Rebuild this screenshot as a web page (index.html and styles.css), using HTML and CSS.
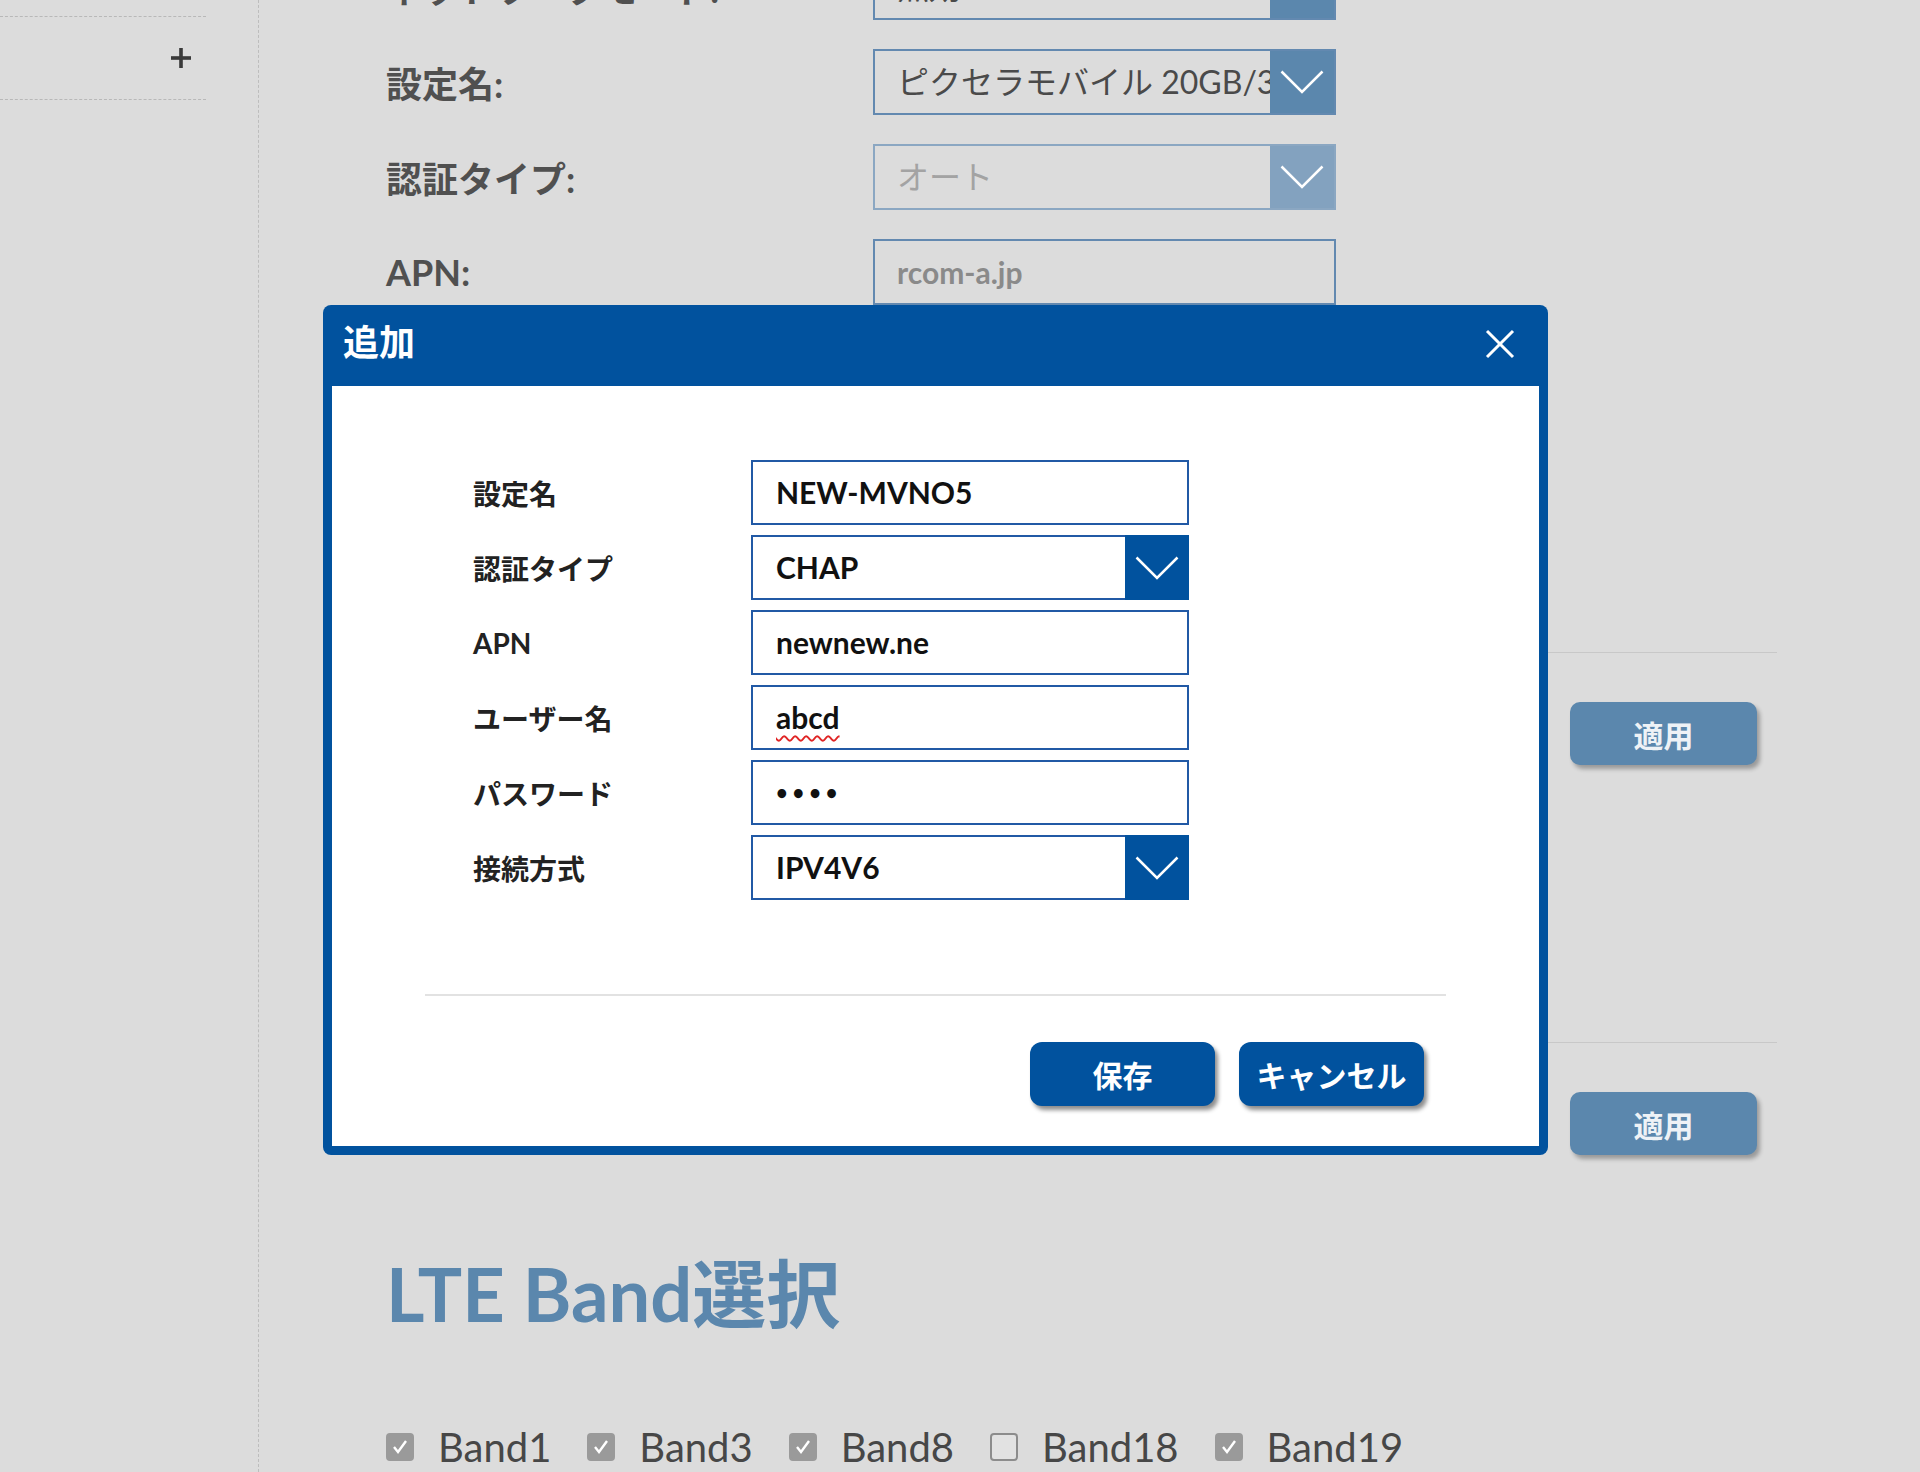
FILE: index.html
```html
<!DOCTYPE html>
<html lang="ja">
<head>
  <meta charset="UTF-8" />
  <meta name="viewport" content="width=device-width, initial-scale=1.0" />
  <title>モバイル設定</title>
  <link rel="stylesheet" href="styles.css">
</head>
<body>
  <div class="page">
    <aside class="sidebar">
      <ul class="menu">
        <li class="menu-item"></li>
        <li class="menu-item">
          <svg class="expand" width="22" height="22" viewBox="0 0 22 22"><rect x="9.2" y="1" width="3.6" height="20" fill="#3a3a3a"/><rect x="1" y="9.2" width="20" height="3.6" fill="#3a3a3a"/></svg>
        </li>
      </ul>
    </aside>

    <main class="content">
      <!-- APN settings -->
      <section class="settings first">
        <div class="row">
          <span class="label">ネットワークモード:</span>
          <div class="select"><span class="value">無効</span><span class="arrow"><svg width="44" height="24" viewBox="0 0 44 24"><polyline points="1.5,1.5 22,22 42.5,1.5" fill="none" stroke="#fff" stroke-width="2.5"/></svg></span></div>
        </div>
        <div class="row">
          <span class="label">設定名:</span>
          <div class="select"><span class="value">ピクセラモバイル 20GB/3GB</span><span class="arrow"><svg width="44" height="24" viewBox="0 0 44 24"><polyline points="1.5,1.5 22,22 42.5,1.5" fill="none" stroke="#fff" stroke-width="2.5"/></svg></span></div>
        </div>
        <div class="row">
          <span class="label">認証タイプ:</span>
          <div class="select disabled"><span class="value">オート</span><span class="arrow"><svg width="44" height="24" viewBox="0 0 44 24"><polyline points="1.5,1.5 22,22 42.5,1.5" fill="none" stroke="#fff" stroke-width="2.5"/></svg></span></div>
        </div>
        <div class="row">
          <span class="label">APN:</span>
          <div class="select text"><span class="value">rcom-a.jp</span></div>
        </div>
      </section>
      <div class="actions"><button class="apply">適用</button></div>

      <!-- second block, covered by the dialog -->
      <section class="settings second"></section>
      <div class="actions"><button class="apply">適用</button></div>

      <h2 class="band-title">LTE Band選択</h2>
      <div class="bands">
        <label class="band"><span class="check on"><svg width="20" height="20" viewBox="0 0 20 20"><polyline points="4,10 8,15 16,4" fill="none" stroke="#fff" stroke-width="2.4"/></svg></span>Band1</label>
        <label class="band"><span class="check on"><svg width="20" height="20" viewBox="0 0 20 20"><polyline points="4,10 8,15 16,4" fill="none" stroke="#fff" stroke-width="2.4"/></svg></span>Band3</label>
        <label class="band"><span class="check on"><svg width="20" height="20" viewBox="0 0 20 20"><polyline points="4,10 8,15 16,4" fill="none" stroke="#fff" stroke-width="2.4"/></svg></span>Band8</label>
        <label class="band"><span class="check"></span>Band18</label>
        <label class="band"><span class="check on"><svg width="20" height="20" viewBox="0 0 20 20"><polyline points="4,10 8,15 16,4" fill="none" stroke="#fff" stroke-width="2.4"/></svg></span>Band19</label>
      </div>
    </main>
  </div>

  <!-- Add profile dialog -->
  <div class="modal">
    <div class="modal-header">
      <h2 class="modal-title">追加</h2>
      <svg class="close" width="32" height="32" viewBox="0 0 32 32"><line x1="3" y1="3" x2="29" y2="29" stroke="#fff" stroke-width="3"/><line x1="29" y1="3" x2="3" y2="29" stroke="#fff" stroke-width="3"/></svg>
    </div>
    <div class="modal-body">
      <div class="form">
        <div class="form-row">
          <span class="form-label">設定名</span>
          <div class="field"><span class="field-value">NEW-MVNO5</span></div>
        </div>
        <div class="form-row">
          <span class="form-label">認証タイプ</span>
          <div class="field"><span class="field-value">CHAP</span><span class="field-arrow"><svg width="44" height="24" viewBox="0 0 44 24"><polyline points="1.5,1.5 22,22 42.5,1.5" fill="none" stroke="#fff" stroke-width="2.5"/></svg></span></div>
        </div>
        <div class="form-row">
          <span class="form-label">APN</span>
          <div class="field"><span class="field-value">newnew.ne</span></div>
        </div>
        <div class="form-row">
          <span class="form-label">ユーザー名</span>
          <div class="field"><span class="field-value"><span class="misspelled">abcd</span></span></div>
        </div>
        <div class="form-row">
          <span class="form-label">パスワード</span>
          <div class="field"><span class="field-value dots">••••</span></div>
        </div>
        <div class="form-row">
          <span class="form-label">接続方式</span>
          <div class="field"><span class="field-value">IPV4V6</span><span class="field-arrow"><svg width="44" height="24" viewBox="0 0 44 24"><polyline points="1.5,1.5 22,22 42.5,1.5" fill="none" stroke="#fff" stroke-width="2.5"/></svg></span></div>
        </div>
      </div>
      <div class="modal-footer">
        <button class="btn">保存</button>
        <button class="btn">キャンセル</button>
      </div>
    </div>
  </div>
</body>
</html>
```

FILE: styles.css
```css
/* General Styles */
body {
  margin: 0;
  background-color: #dcdcdc;
  font-family: Lato, "Noto Sans CJK JP", sans-serif;
  color: #4d4d4d;
  overflow: hidden;
}

.page {
  display: flex;
  min-height: 1472px;
}

/* Sidebar */
.sidebar {
  width: 258px;
  flex-shrink: 0;
  border-right: 1px dashed #bdbdbd;
}

.menu {
  list-style: none;
  margin: -66px 0 0;
  padding: 0;
  width: 206px;
}

.menu-item {
  height: 82px;
  border-bottom: 1px dashed #b8b8b8;
  display: flex;
  align-items: center;
  justify-content: flex-end;
  padding-right: 14px;
}

/* Content */
.content {
  padding-left: 127px;
  width: 1391px;
}

.settings {
  display: flex;
  flex-direction: column;
  gap: 29px;
  border-bottom: 1px solid #c8c8c8;
}

.settings.first {
  margin-top: -46px;
  padding-bottom: 347px;
}

.settings.second {
  margin-top: 49px;
  height: 228px;
}

.row {
  display: flex;
  align-items: center;
  height: 66px;
}

.label {
  width: 487px;
  font-size: 36px;
  font-weight: 700;
  color: #505050;
}

.select {
  width: 463px;
  height: 66px;
  box-sizing: border-box;
  border: 2px solid #6389b0;
  display: flex;
}

.select .value {
  flex: 1;
  padding-left: 22px;
  font-size: 32px;
  line-height: 62px;
  white-space: nowrap;
  overflow: hidden;
  color: #4a4a4a;
}

.select .arrow {
  width: 64px;
  background-color: #5b87ad;
  display: flex;
  align-items: center;
  justify-content: center;
}

.select.disabled {
  border-color: #8ba7c2;
}

.select.disabled .value {
  color: #a3a3a3;
}

.select.disabled .arrow {
  background-color: #83a2bf;
}

.select.text .value {
  font-size: 30px;
  font-weight: 700;
  color: #8a8a8a;
}

.actions {
  display: flex;
  justify-content: flex-end;
  padding: 49px 20px 0 0;
}

.apply {
  width: 187px;
  height: 63px;
  border: none;
  border-radius: 10px;
  background-color: #5b87ad;
  color: #eef2f6;
  font-family: inherit;
  font-size: 30px;
  font-weight: 700;
  box-shadow: 3px 4px 4px rgba(0, 0, 0, 0.3);
}

.band-title {
  margin: 102px 0 0;
  font-size: 74px;
  line-height: 1;
  font-weight: 700;
  color: #5b87ad;
}

.bands {
  display: flex;
  gap: 36px;
  margin-top: 94px;
}

.band {
  display: flex;
  align-items: center;
  gap: 24px;
  font-size: 40px;
  line-height: 44px;
  color: #474747;
}

.check {
  width: 28px;
  height: 28px;
  box-sizing: border-box;
  border: 2px solid #8c8c8c;
  border-radius: 4px;
  background-color: #e2e2e2;
  display: flex;
  align-items: center;
  justify-content: center;
}

.check.on {
  background-color: #9a9a9a;
  border-color: #9a9a9a;
}

/* Modal */
.modal {
  position: absolute;
  left: 323px;
  top: 305px;
  width: 1225px;
  height: 850px;
  box-sizing: border-box;
  padding: 0 9px 9px;
  background-color: #01529e;
  border-radius: 8px;
  display: flex;
  flex-direction: column;
}

.modal-header {
  height: 81px;
  flex-shrink: 0;
  display: flex;
  align-items: center;
  justify-content: space-between;
  padding: 0 23px 12px 11px;
  box-sizing: border-box;
}

.modal-title {
  margin: 0;
  font-size: 36px;
  font-weight: 700;
  color: #fff;
}

.close {
  margin-top: 8px;
}

.modal-body {
  flex: 1;
  background-color: #fff;
  padding: 74px 93px 0;
}

.form {
  display: flex;
  flex-direction: column;
  gap: 10px;
  padding: 0 0 94px 48px;
  border-bottom: 2px solid #e2e2e2;
}

.form-row {
  display: flex;
  align-items: center;
  height: 65px;
}

.form-label {
  width: 278px;
  font-size: 28px;
  font-weight: 700;
  color: #222;
}

.field {
  width: 438px;
  height: 65px;
  box-sizing: border-box;
  border: 2px solid #2159a5;
  display: flex;
}

.field-value {
  flex: 1;
  padding-left: 23px;
  font-size: 30px;
  font-weight: 700;
  line-height: 61px;
  color: #111;
}

.field-value.dots {
  font-size: 20px;
  letter-spacing: 5px;
  padding-top: 0;
}

.misspelled {
  text-decoration: underline wavy #e02424;
  text-decoration-thickness: 1.5px;
  text-underline-offset: 6px;
}

.field-arrow {
  width: 64px;
  margin: -2px -2px -2px 0;
  background-color: #01529e;
  display: flex;
  align-items: center;
  justify-content: center;
}

.modal-footer {
  display: flex;
  justify-content: flex-end;
  gap: 24px;
  padding: 46px 22px 0 0;
}

.btn {
  width: 185px;
  height: 64px;
  border: none;
  border-radius: 12px;
  background-color: #01529e;
  color: #fff;
  font-family: inherit;
  font-size: 30px;
  font-weight: 700;
  box-shadow: 3px 4px 4px rgba(0, 0, 0, 0.45);
}
```
